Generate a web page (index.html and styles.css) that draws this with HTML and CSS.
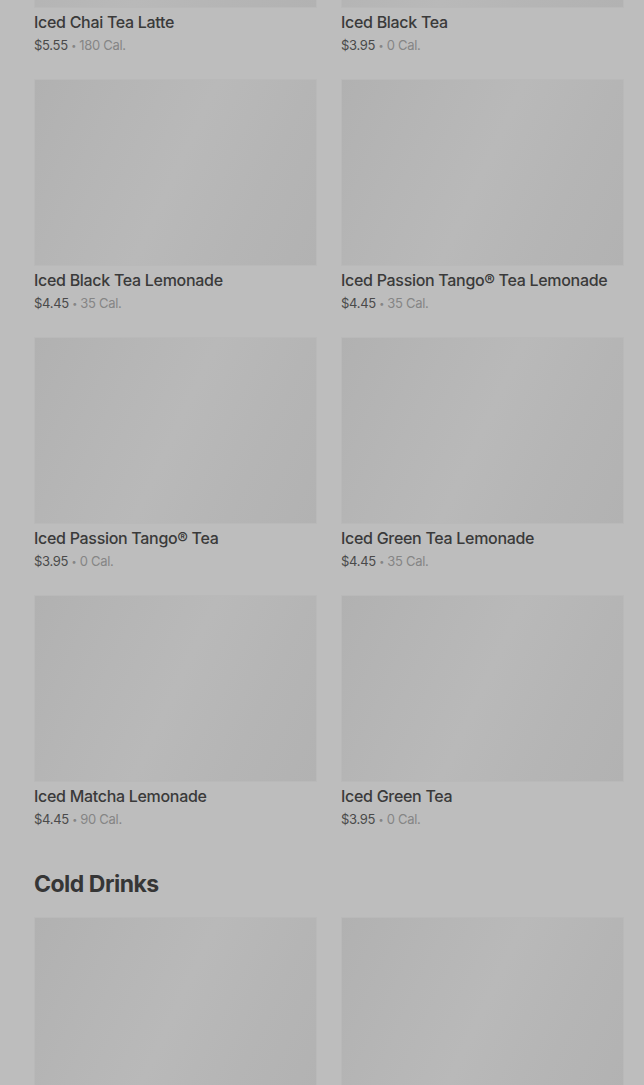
FILE: index.html
```html
<!DOCTYPE html>
<html>
<head>
<meta charset="utf-8">
<link rel="stylesheet" href="styles.css">
</head>
<body>
<main class="page">
  <section class="grid first">
    <div class="card"><div class="img"></div><div class="title">Iced Chai Tea Latte</div><div class="meta"><span class="price">$5.55</span> <span class="dot">•</span> 180 Cal.</div></div>
    <div class="card"><div class="img"></div><div class="title">Iced Black Tea</div><div class="meta"><span class="price">$3.95</span> <span class="dot">•</span> 0 Cal.</div></div>
    <div class="card"><div class="img"></div><div class="title">Iced Black Tea Lemonade</div><div class="meta"><span class="price">$4.45</span> <span class="dot">•</span> 35 Cal.</div></div>
    <div class="card"><div class="img"></div><div class="title">Iced Passion Tango® Tea Lemonade</div><div class="meta"><span class="price">$4.45</span> <span class="dot">•</span> 35 Cal.</div></div>
    <div class="card"><div class="img"></div><div class="title">Iced Passion Tango® Tea</div><div class="meta"><span class="price">$3.95</span> <span class="dot">•</span> 0 Cal.</div></div>
    <div class="card"><div class="img"></div><div class="title">Iced Green Tea Lemonade</div><div class="meta"><span class="price">$4.45</span> <span class="dot">•</span> 35 Cal.</div></div>
    <div class="card"><div class="img"></div><div class="title">Iced Matcha Lemonade</div><div class="meta"><span class="price">$4.45</span> <span class="dot">•</span> 90 Cal.</div></div>
    <div class="card"><div class="img"></div><div class="title">Iced Green Tea</div><div class="meta"><span class="price">$3.95</span> <span class="dot">•</span> 0 Cal.</div></div>
  </section>
  <h2 class="heading">Cold Drinks</h2>
  <section class="grid">
    <div class="card"><div class="img"></div></div>
    <div class="card"><div class="img"></div></div>
  </section>
</main>
</body>
</html>
```
FILE: styles.css
```css
html, body {
  margin: 0;
  padding: 0;
  background: #bdbdbd;
  height: 1085px;
  overflow: hidden;
}
.page {
  padding: 0 20px 0 34px;
  font-family: Inter, "Noto Sans", sans-serif;
}
.grid {
  display: grid;
  grid-template-columns: 283px 283px;
  column-gap: 24px;
  row-gap: 25px;
}
.grid.first {
  margin-top: -179px;
}
.img {
  height: 187px;
  background: linear-gradient(115deg, #b1b1b1 0%, #b6b6b6 30%, #b9b9b9 50%, #b5b5b5 75%, #b2b2b2 100%);
  box-shadow: inset 0 0 0 1px #b9b9b9;
}
.title {
  margin-top: 4px;
  height: 20px;
  font-size: 16px;
  line-height: 20px;
  font-weight: 500;
  color: #3a3a3a;
  letter-spacing: -0.3px;
}
.meta {
  margin-top: 4px;
  height: 18px;
  font-size: 13px;
  line-height: 18px;
  color: #858585;
  letter-spacing: -0.3px;
}
.dot {
  font-size: 9px;
  line-height: 0;
  vertical-align: 1px;
}
.price {
  color: #4a4a4a;
}
.heading {
  margin: 40px 0 17px;
  height: 32px;
  font-size: 23px;
  line-height: 32px;
  font-weight: 700;
  color: #363636;
  letter-spacing: -0.5px;
}
```
